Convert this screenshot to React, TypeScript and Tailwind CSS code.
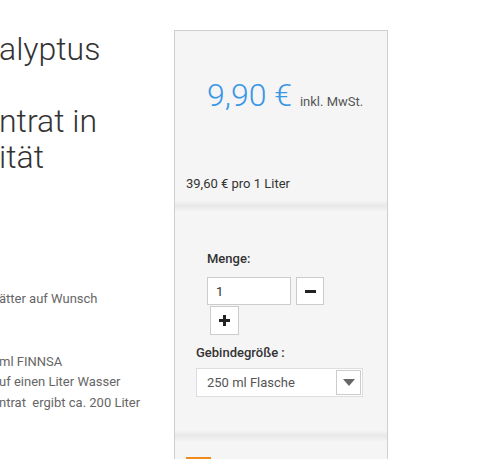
export default function App() {
  return (
    <div className="flex h-[459px] w-[497px] overflow-hidden bg-white font-['Roboto',sans-serif]">
      <div className="w-[174px] shrink-0 overflow-hidden">
        <div className="-ml-[1px] pt-[31px] text-[32px] font-light leading-[36px] text-[#333]">
          <p>alyptus</p>
          <p className="mt-[36px]">ntrat in</p>
          <p>ität</p>
        </div>
        <div className="-ml-[1px] text-[13px] leading-[20.5px] text-[#666]">
          <p className="mt-[114px]">ätter auf Wunsch</p>
          <p className="mt-[42px]">ml FINNSA</p>
          <p>uf einen Liter Wasser</p>
          <p>ntrat&nbsp; ergibt ca. 200 Liter</p>
        </div>
      </div>

      <div className="mt-[30px] w-[214px] shrink-0 border-x border-t border-[#cfcfcf] bg-[#f5f5f5]">
        <div className="h-[170px] px-[11px]">
          <div className="flex items-baseline pl-[21px] pt-[45px]">
            <span className="text-[32px] font-light leading-[38px] text-[#3a97e6]">9,90 €</span>
            <span className="ml-[8px] text-[13px] text-[#555]">inkl. MwSt.</span>
          </div>
          <p className="mt-[60px] text-[13px] text-[#333]">39,60 € pro 1 Liter</p>
        </div>
        <div className="h-[10px] bg-[linear-gradient(to_bottom,#f3f3f3,#e8e8e8_45%,#f3f3f3)]" />

        <div className="h-[220px] px-[21px] pt-[40px]">
          <div className="pl-[11px]">
            <p className="text-[13px] font-medium leading-[16px] text-[#333]">Menge:</p>
            <div className="mt-[10px] flex flex-wrap gap-x-[5px]">
              <input
                defaultValue="1"
                className="h-[28px] w-[84px] border border-[#ccc] bg-white px-[8px] text-[13px] text-[#333] outline-none"
              />
              <button className="flex h-[28px] w-[28px] items-center justify-center border border-[#ccc] bg-white">
                <span className="block h-[3px] w-[11px] bg-[#222]" />
              </button>
            </div>
            <button className="relative ml-[3px] mt-[1px] flex h-[29px] w-[29px] items-center justify-center border border-[#ccc] bg-white">
              <span className="absolute h-[3px] w-[11px] bg-[#222]" />
              <span className="absolute h-[11px] w-[3px] bg-[#222]" />
            </button>
          </div>
          <p className="mt-[10px] text-[13px] font-medium leading-[16px] text-[#333]">Gebindegröße :</p>
          <div className="mt-[7px] flex h-[29px] w-[167px] items-center justify-between border border-[#ddd] bg-white pl-[10px] pr-[1px]">
            <span className="text-[13px] text-[#555]">250 ml Flasche</span>
            <span className="flex h-[25px] w-[25px] items-center justify-center border border-[#ccc] bg-white">
              <svg width="12" height="7" viewBox="0 0 12 7">
                <path d="M0 0H12L6 7Z" fill="#666" />
              </svg>
            </span>
          </div>
        </div>
        <div className="h-[10px] bg-[linear-gradient(to_bottom,#f3f3f3,#e8e8e8_45%,#f3f3f3)]" />

        <div className="px-[11px] pt-[16px]">
          <div className="h-[6px] w-[25px] bg-[#f08a1c]" />
        </div>
      </div>
    </div>
  );
}
